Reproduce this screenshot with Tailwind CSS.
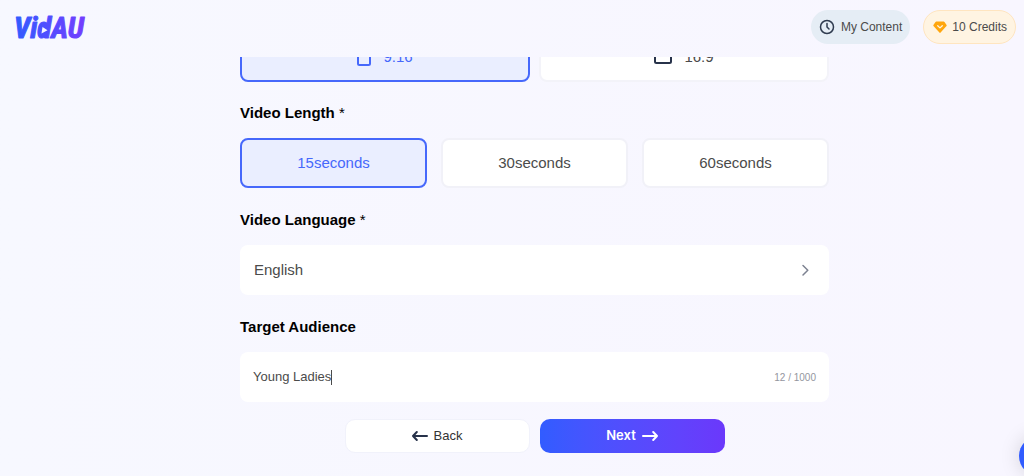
<!DOCTYPE html>
<html lang="en">
<head>
<meta charset="utf-8">
<meta name="viewport" content="width=device-width, initial-scale=1">
<title>VidAU</title>
<script src="https://cdn.jsdelivr.net/npm/@tailwindcss/browser@4"></script>
</head>
<body class="relative flex h-screen flex-col overflow-hidden bg-linear-to-r from-[#f7f8ff] to-[#f8f6ff] font-['Liberation_Sans',Arial,sans-serif] text-[15px] text-[#4b4b4b]">
  <header class="flex h-[57px] shrink-0 items-start justify-between pt-[10px] pr-2 pl-[14px]">
    <a href="#" aria-label="VidAU">
      <svg class="block h-[34px] w-[76px]" viewBox="0 0 76 34">
        <defs>
          <linearGradient id="brand" gradientUnits="userSpaceOnUse" x1="0" y1="0" x2="72" y2="0">
            <stop offset="0" stop-color="#315cff"/><stop offset="1" stop-color="#743dff"/>
          </linearGradient>
        </defs>
        <path d="M29 15h6l-2 11h-6z" fill="url(#brand)"/>
        <text x="0" y="28" fill="url(#brand)" stroke="url(#brand)" stroke-width="1" stroke-linejoin="round" class="font-['Liberation_Sans_Narrow','Roboto_Condensed','Roboto',sans-serif] text-[29px] font-bold italic">VidAU</text>
        <path d="M28.500 17l5 3.200l-6 3.300z" fill="#f6f7ff"/>
      </svg>
    </a>
    <nav class="flex gap-[13px] text-xs">
      <a href="#" class="flex h-[34px] items-center gap-[6px] rounded-full bg-[#e5edf5] px-2">
        <svg class="size-4" viewBox="0 0 16 16" fill="none" stroke="#2f3b4f" stroke-width="1.500" stroke-linecap="round" stroke-linejoin="round"><circle cx="8" cy="8" r="6.500"/><path d="M8 4.500V8l2 2"/></svg>
        My Content
      </a>
      <a href="#" class="flex h-[34px] items-center gap-1 rounded-full border border-[#ffe5c0] bg-[#fff4e2] px-2">
        <svg class="size-4" viewBox="0 0 16 16"><path d="M4.300 2.500h7.400q.5 0 .8.400l2.100 3.200q.3.500-.1 1L8.600 13.600q-.6.600-1.200 0L1.500 7.100q-.4-.5-.1-1l2.100-3.200q.3-.4.8-.4z" fill="#ffa60d"/><path d="M5.700 6.700L8 8.900l2.300-2.200" fill="none" stroke="#fff4e2" stroke-width="1.300" stroke-linecap="round" stroke-linejoin="round"/></svg>
        10 Credits
      </a>
    </nav>
  </header>

  <main class="overflow-hidden pl-[45px]">
    <form id="video" class="mx-auto -mt-[25px] w-full max-w-[589px]">
      <div role="radiogroup" aria-label="Aspect ratio" class="grid grid-cols-2 gap-[9px]">
        <label class="relative flex h-[50px] items-center justify-center gap-3 rounded-lg border-2 border-[#f3f3f9] bg-white has-checked:border-[#4668fb] has-checked:bg-[#eaeeff] has-checked:text-[#4668fb]">
          <input type="radio" name="ratio" value="9:16" checked class="sr-only">
          <svg class="h-[18px] w-[14px]" viewBox="0 0 14 18" fill="none" stroke="#4668fb" stroke-width="2"><rect x="1" y="1" width="12" height="16" rx="1.500"/></svg>
          9:16
        </label>
        <label class="relative flex h-[50px] items-center justify-center gap-3 rounded-lg border-2 border-[#f3f3f9] bg-white has-checked:border-[#4668fb] has-checked:bg-[#eaeeff] has-checked:text-[#4668fb]">
          <input type="radio" name="ratio" value="16:9" class="sr-only">
          <svg class="h-[14px] w-[18px]" viewBox="0 0 18 14" fill="none" stroke="#27324a" stroke-width="2"><rect x="1" y="1" width="16" height="12" rx="1.500"/></svg>
          16:9
        </label>
      </div>

      <h2 id="length" class="mt-[19px] mb-[13px] leading-6 font-bold text-black">Video Length <span class="font-normal">*</span></h2>
      <div role="radiogroup" aria-labelledby="length" class="grid grid-cols-3 gap-[14px]">
        <label class="relative flex h-[50px] items-center justify-center rounded-lg border-2 border-[#f1f1f8] bg-white has-checked:border-[#4668fb] has-checked:bg-[#eaeeff] has-checked:text-[#4668fb]">
          <input type="radio" name="length" value="15" checked class="sr-only">15seconds
        </label>
        <label class="relative flex h-[50px] items-center justify-center rounded-lg border-2 border-[#f1f1f8] bg-white has-checked:border-[#4668fb] has-checked:bg-[#eaeeff] has-checked:text-[#4668fb]">
          <input type="radio" name="length" value="30" class="sr-only">30seconds
        </label>
        <label class="relative flex h-[50px] items-center justify-center rounded-lg border-2 border-[#f1f1f8] bg-white has-checked:border-[#4668fb] has-checked:bg-[#eaeeff] has-checked:text-[#4668fb]">
          <input type="radio" name="length" value="60" class="sr-only">60seconds
        </label>
      </div>

      <label for="language" class="mt-5 mb-[13px] block leading-6 font-bold text-black">Video Language <span class="font-normal">*</span></label>
      <div class="flex h-[50px] items-center rounded-lg bg-white pr-4 pl-[14px]">
        <select id="language" class="h-full flex-1 appearance-none bg-transparent outline-none"><option>English</option></select>
        <svg class="size-4" viewBox="0 0 16 16" fill="none" stroke="#7d8291" stroke-width="1.500" stroke-linecap="round" stroke-linejoin="round"><path d="M6 3.500L10.800 8.200L6 13"/></svg>
      </div>

      <label for="audience" class="mt-5 mb-[13px] block leading-6 font-bold text-black">Target Audience</label>
      <div class="flex h-[50px] items-center rounded-lg bg-white px-[13px]">
        <input id="audience" type="text" value="Young Ladies" maxlength="1000" class="field-sizing-content text-[13px] caret-transparent outline-none">
        <span class="h-[15px] w-px bg-[#4b4b4b]"></span>
        <span class="ml-auto text-[10px] text-[#94969e]">12 / 1000</span>
      </div>
    </form>
  </main>

  <footer class="mt-[17px] pl-[45px]">
    <div class="mx-auto grid w-full max-w-[380px] grid-cols-2 gap-[10px] text-[13px]">
      <button type="button" class="flex h-[34px] items-center justify-center gap-[6px] rounded-[10px] border border-[#f1f2fb] bg-white text-[#333]">
        <svg class="size-4" viewBox="0 0 16 16" fill="none" stroke="#27324a" stroke-width="2" stroke-linecap="round" stroke-linejoin="round"><path d="M15 8H1M4.800 4L1 8l3.800 4"/></svg>
        Back
      </button>
      <button type="submit" form="video" class="flex h-[34px] items-center justify-center gap-[6px] rounded-[10px] bg-linear-to-r from-[#315cff] to-[#6b38fb] font-['Inter',sans-serif] font-semibold text-white">
        Next
        <svg class="size-4" viewBox="0 0 16 16" fill="none" stroke="currentColor" stroke-width="2" stroke-linecap="round" stroke-linejoin="round"><path d="M1 8h14M11.200 4L15 8l-3.800 4"/></svg>
      </button>
    </div>
  </footer>

  <button type="button" aria-label="Open chat" class="absolute -right-[35px] bottom-0 size-[40px] rounded-full bg-[#315cff] shadow-[0_0_20px_rgba(0,0,0,0.15)]"></button>
</body>
</html>
